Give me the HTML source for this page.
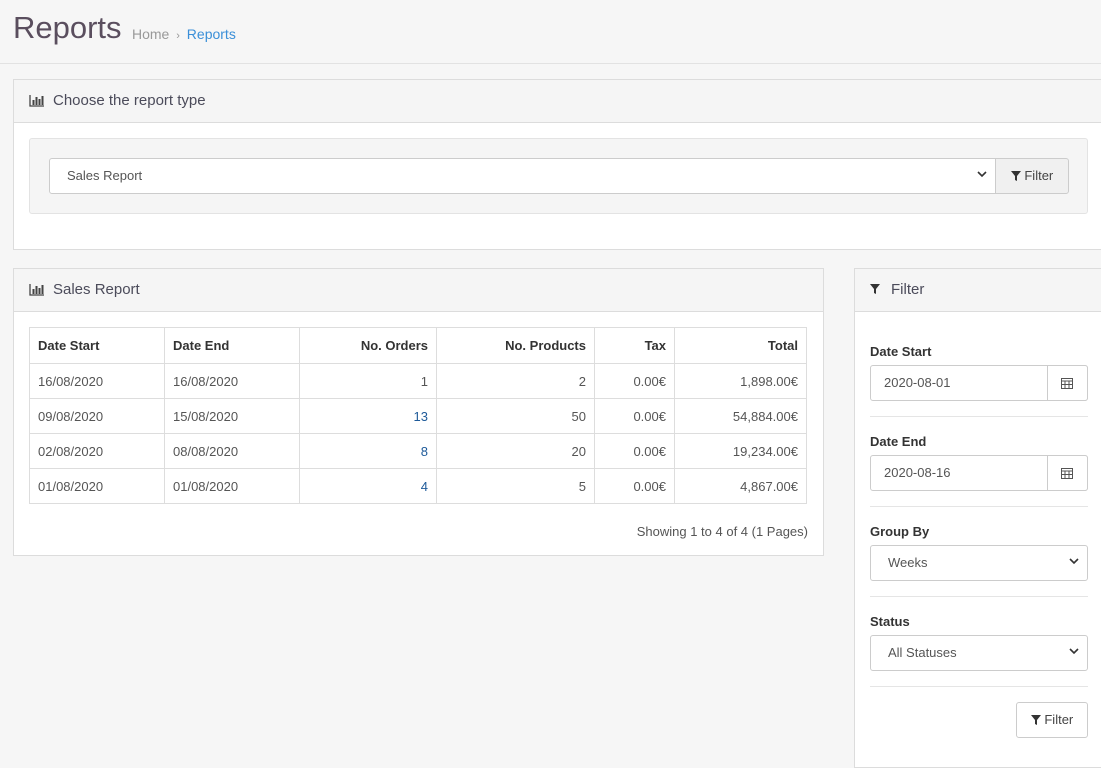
<!DOCTYPE html>
<html><head><style>
*{box-sizing:border-box;margin:0;padding:0}
body{width:1101px;height:752px;background:#f6f6f6;font-family:"Liberation Sans",sans-serif;font-size:13px;color:#555;position:relative;overflow:hidden}
.a{position:absolute}
.panel{position:absolute;background:#fff;border:1px solid #dcdcdc}
.ph{height:43px;background:#f5f5f5;border-bottom:1px solid #dcdcdc;font-size:15px;color:#4b4b5a;padding:12px 0 0 15px}
.ph svg{vertical-align:-2px;margin-right:8px}
.ctl{position:absolute;background:#fff;border:1px solid #ccc;border-radius:3px;font-size:13px;color:#555;padding:0 17px;line-height:33px}
.caret{position:absolute;right:8px;top:12px}
table{border-collapse:collapse;position:absolute;left:15px;top:15px;width:778px}
td,th{border:1px solid #ddd;height:35px;padding:0 8px;font-size:13px}
th{font-weight:bold;color:#333;text-align:left;height:36px}
.r{text-align:right}
.lnk{color:#1e5a99}
.lbl{position:absolute;left:15px;font-weight:bold;color:#333;font-size:13px}
.hr{position:absolute;left:15px;width:218px;border-top:1px solid #e5e5e5}
.btn{position:absolute;background:#fff;border:1px solid #ccc;border-radius:3px;font-size:13px;color:#444;text-align:center;line-height:33px}
</style></head><body>
<div class="a" style="left:13px;top:10px;font-size:31px;color:#5a4e5e">Reports</div>
<div class="a" style="left:132px;top:26px;font-size:14px;color:#999">Home <span style="font-size:11px;margin:0 3px">›</span> <span style="color:#3a8fd8">Reports</span></div>
<div class="a" style="left:0;top:63px;width:1101px;border-top:1px solid #e2e2e2"></div>

<svg width="0" height="0" style="position:absolute"><defs><g id="chart"><path d="M1 1V12H15" stroke="#444" stroke-width="1.3" fill="none"/><rect x="3.5" y="6" width="2" height="5" fill="#444"/><rect x="6.5" y="3" width="2" height="8" fill="#444"/><rect x="9.5" y="5" width="2" height="6" fill="#444"/><rect x="12.5" y="2" width="2" height="9" fill="#444"/></g><path id="fun" d="M0 0H10L6 5V10L4 9V5Z"/></defs></svg>

<div class="panel" style="left:13px;top:79px;width:1100px;height:171px">
<div class="ph"><svg width="16" height="13"><use href="#chart"/></svg>Choose the report type</div>
<div class="a" style="left:15px;top:58px;width:1059px;height:76px;background:#f5f5f5;border:1px solid #e3e3e3;border-radius:3px"></div>
<div class="ctl" style="left:35px;top:78px;width:947px;height:36px;border-radius:3px 0 0 3px">Sales Report<svg class="caret" width="10" height="7"><path d="M1 1L5 5L9 1" stroke="#333" stroke-width="1.6" fill="none"/></svg></div>
<div class="btn" style="left:981px;top:78px;width:74px;height:36px;background:#f0f0f0;border-radius:0 3px 3px 0"><svg width="10" height="10" style="vertical-align:-1px"><use href="#fun" fill="#333"/></svg> Filter</div>
</div>

<div class="panel" style="left:13px;top:268px;width:811px;height:288px">
<div class="ph"><svg width="16" height="13"><use href="#chart"/></svg>Sales Report</div>
<table style="top:58px">
<tr><th style="width:135px">Date Start</th><th style="width:135px">Date End</th><th class="r" style="width:137px">No. Orders</th><th class="r" style="width:158px">No. Products</th><th class="r" style="width:80px">Tax</th><th class="r">Total</th></tr>
<tr><td>16/08/2020</td><td>16/08/2020</td><td class="r">1</td><td class="r">2</td><td class="r">0.00€</td><td class="r">1,898.00€</td></tr>
<tr><td>09/08/2020</td><td>15/08/2020</td><td class="r lnk">13</td><td class="r">50</td><td class="r">0.00€</td><td class="r">54,884.00€</td></tr>
<tr><td>02/08/2020</td><td>08/08/2020</td><td class="r lnk">8</td><td class="r">20</td><td class="r">0.00€</td><td class="r">19,234.00€</td></tr>
<tr><td>01/08/2020</td><td>01/08/2020</td><td class="r lnk">4</td><td class="r">5</td><td class="r">0.00€</td><td class="r">4,867.00€</td></tr>
</table>
<div class="a" style="right:15px;top:255px;color:#555">Showing 1 to 4 of 4 (1 Pages)</div>
</div>

<div class="panel" style="left:854px;top:268px;width:260px;height:500px">
<div class="ph"><svg width="11" height="11" style="margin-right:10px;vertical-align:-1px"><use href="#fun" fill="#333"/></svg>Filter</div>
<div class="lbl" style="top:75px">Date Start</div>
<div class="ctl" style="left:15px;top:96px;width:218px;height:36px;padding-left:13px">2020-08-01</div>
<div class="a" style="left:192px;top:96px;width:41px;height:36px;border-left:1px solid #ccc;background:#fff;border:1px solid #ccc;border-radius:0 3px 3px 0"><svg width="12" height="12" style="position:absolute;left:13px;top:11px"><rect x="0.5" y="1.5" width="11" height="10" fill="none" stroke="#555"/><path d="M0 4H12M4 4V12M8 4V12M0 7.5H12" stroke="#555"/></svg></div>
<div class="hr" style="top:147px"></div>
<div class="lbl" style="top:165px">Date End</div>
<div class="ctl" style="left:15px;top:186px;width:218px;height:36px;padding-left:13px">2020-08-16</div>
<div class="a" style="left:192px;top:186px;width:41px;height:36px;background:#fff;border:1px solid #ccc;border-radius:0 3px 3px 0"><svg width="12" height="12" style="position:absolute;left:13px;top:11px"><rect x="0.5" y="1.5" width="11" height="10" fill="none" stroke="#555"/><path d="M0 4H12M4 4V12M8 4V12M0 7.5H12" stroke="#555"/></svg></div>
<div class="hr" style="top:237px"></div>
<div class="lbl" style="top:255px">Group By</div>
<div class="ctl" style="left:15px;top:276px;width:218px;height:36px">Weeks<svg class="caret" width="10" height="7"><path d="M1 1L5 5L9 1" stroke="#333" stroke-width="1.6" fill="none"/></svg></div>
<div class="hr" style="top:327px"></div>
<div class="lbl" style="top:345px">Status</div>
<div class="ctl" style="left:15px;top:366px;width:218px;height:36px">All Statuses<svg class="caret" width="10" height="7"><path d="M1 1L5 5L9 1" stroke="#333" stroke-width="1.6" fill="none"/></svg></div>
<div class="hr" style="top:417px"></div>
<div class="btn" style="left:161px;top:433px;width:72px;height:36px"><svg width="10" height="10" style="vertical-align:-1px"><use href="#fun" fill="#333"/></svg> Filter</div>
</div>
</body></html>
